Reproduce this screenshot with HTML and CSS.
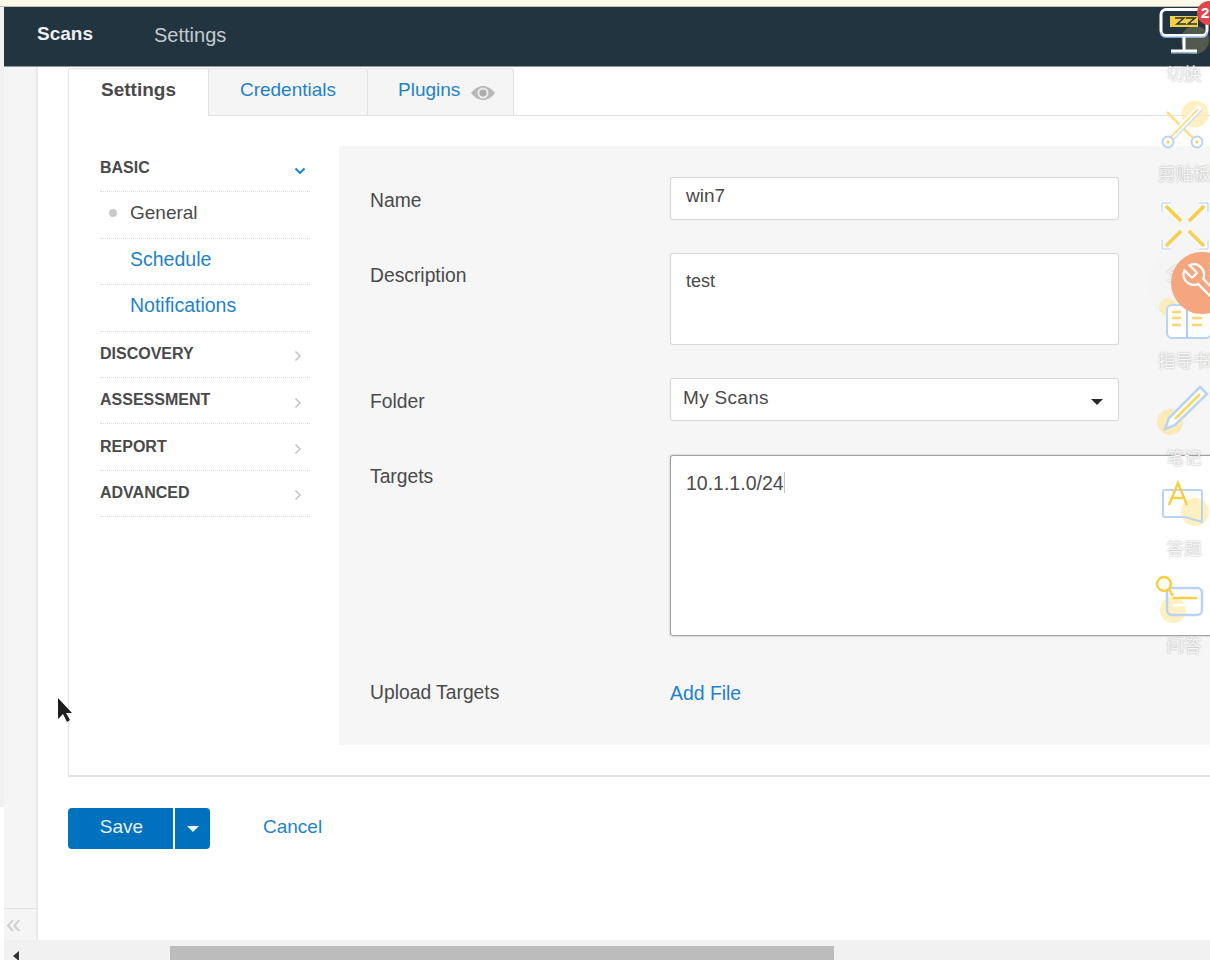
FILE: index.html
```html
<!DOCTYPE html>
<html>
<head>
  <link rel="stylesheet" href="styles.css">
</head>
<body>
  <div class="notice-strip"></div>
  <div class="window">
    <div class="edge"><div class="edge-fill"></div></div>
    <div class="app">
      <div class="navbar">
        <a class="nav-link active">Scans</a>
        <a class="nav-link">Settings</a>
      </div>
      <div class="workspace">
        <div class="sidebar">
          <div class="sidebar-foot">&laquo;</div>
        </div>
        <div class="content">
          <div class="tabs">
            <div class="tab active">Settings</div>
            <div class="tab credentials">Credentials</div>
            <div class="tab plugins">
              Plugins
              <svg class="eye" viewBox="0 0 26 16" width="26" height="16">
                <path d="M1 8C5 3 9 1 13 1s8 2 12 7c-4 5-8 7-12 7S5 13 1 8z" fill="#b8b8b8"/>
                <circle cx="13" cy="8" r="5.500" fill="#ececec"/>
                <circle cx="13" cy="8" r="3.600" fill="#adadad"/>
              </svg>
            </div>
            <div class="tabs-rest"></div>
          </div>
          <div class="panel">
            <div class="menu">
              <div class="menu-row head">BASIC
                <svg class="chev chev-open" viewBox="0 0 12 8" width="12" height="8"><path d="M1.500 1.500 6 6l4.500-4.500" fill="none" stroke="#1c86d0" stroke-width="2"/></svg>
              </div>
              <div class="menu-row current"><span class="dot"></span>General</div>
              <div class="menu-row sub">Schedule</div>
              <div class="menu-row sub">Notifications</div>
              <div class="menu-row head">DISCOVERY
                <svg class="chev" viewBox="0 0 8 12" width="8" height="12"><path d="M1.500 1.500 6 6l-4.500 4.500" fill="none" stroke="#c4c4c4" stroke-width="1.500"/></svg>
              </div>
              <div class="menu-row head">ASSESSMENT
                <svg class="chev" viewBox="0 0 8 12" width="8" height="12"><path d="M1.500 1.500 6 6l-4.500 4.500" fill="none" stroke="#c4c4c4" stroke-width="1.500"/></svg>
              </div>
              <div class="menu-row head">REPORT
                <svg class="chev" viewBox="0 0 8 12" width="8" height="12"><path d="M1.500 1.500 6 6l-4.500 4.500" fill="none" stroke="#c4c4c4" stroke-width="1.500"/></svg>
              </div>
              <div class="menu-row head">ADVANCED
                <svg class="chev" viewBox="0 0 8 12" width="8" height="12"><path d="M1.500 1.500 6 6l-4.500 4.500" fill="none" stroke="#c4c4c4" stroke-width="1.500"/></svg>
              </div>
            </div>
            <div class="form">
              <div class="form-row row-name">
                <div class="form-label">Name</div>
                <div class="field field-input">win7</div>
              </div>
              <div class="form-row row-desc">
                <div class="form-label">Description</div>
                <div class="field field-area">test</div>
              </div>
              <div class="form-row row-folder">
                <div class="form-label">Folder</div>
                <div class="field field-select">My Scans<span class="select-caret"></span></div>
              </div>
              <div class="form-row row-targets">
                <div class="form-label">Targets</div>
                <div class="field field-targets">10.1.1.0/24<span class="text-caret"></span></div>
              </div>
              <div class="form-row row-upload">
                <div class="form-label">Upload Targets</div>
                <a class="add-file">Add File</a>
              </div>
            </div>
          </div>
          <div class="actions">
            <div class="btn-save">Save</div>
            <div class="btn-split"><span class="split-caret"></span></div>
            <a class="cancel">Cancel</a>
          </div>
        </div>
      </div>
    </div>
  </div>
  <div class="hscroll">
    <span class="hscroll-arrow"></span>
    <div class="hscroll-thumb"></div>
  </div>

  <!-- floating cursor -->
  <svg class="cursor" viewBox="0 0 20 28" width="20" height="28">
    <path d="M1 1v21l5-5 4 8 3-2-4-7h6z" fill="#1d1d1d"/>
  </svg>

  <!-- floating tool dock -->
  <div class="dock">
    <div class="dock-item h-switch">
      <span class="badge">2</span>
      <svg viewBox="0 0 52 50" width="52" height="50">
        <circle cx="36" cy="32" r="14" fill="#ffe08a" opacity=".22"/>
        <rect x="2" y="1.500" width="46" height="26" rx="5" fill="none" stroke="#fff" stroke-width="3"/>
        <path d="M2 24q0 5 5 5h36q5 0 5-5" fill="none" stroke="#a9c8ee" stroke-width="1.500"/>
        <path d="M11 8h28v11H11z" fill="#f6cf45"/>
        <path d="M16 10h9l-7 6h9M27 10h9l-7 6h9" fill="none" stroke="#22343f" stroke-width="1.500"/>
        <path d="M25 29v13M12 43h26" stroke="#fff" stroke-width="3"/>
        <path d="M12 45h26" stroke="#a9c8ee" stroke-width="1"/>
      </svg>
      <div class="dock-label">切换</div>
    </div>
    <div class="dock-item h-clip">
      <svg viewBox="0 0 52 54" width="52" height="54">
        <circle cx="36" cy="14" r="13.500" fill="#ffe9a8" opacity=".7"/>
        <path d="M8 12l28 28" stroke="#ffe08a" stroke-width="2.500"/>
        <path d="M11 39 41 8" stroke="#c6dbf4" stroke-width="7"/>
        <path d="M11 38 41 7" stroke="#fff" stroke-width="6"/>
        <path d="M39 9 12 37" stroke="#ffe08a" stroke-width="2"/>
        <circle cx="9" cy="42" r="5.500" fill="#fff" stroke="#b9d3f2" stroke-width="2"/>
        <circle cx="38" cy="42" r="5.500" fill="#fff" stroke="#b9d3f2" stroke-width="2"/>
        <circle cx="9" cy="42" r="1.500" fill="#f6cf45"/>
        <circle cx="38" cy="42" r="1.500" fill="#f6cf45"/>
      </svg>
      <div class="dock-label">剪贴板</div>
    </div>
    <div class="dock-item h-full">
      <svg viewBox="0 0 52 52" width="52" height="52">
        <path d="M3 12V3h9M40 3h9v9M3 40v9h9M49 40v9h-9" fill="none" stroke="#fff" stroke-width="4"/>
        <path d="M3 12V3h9M40 3h9v9M3 40v9h9M49 40v9h-9" fill="none" stroke="#a9c8ee" stroke-width="1"/>
        <path d="M7 6l15 15M45 6 30 21M7 46l15-15M45 46 30 31" stroke="#f6cf45" stroke-width="3.500"/>
      </svg>
      <div class="dock-label">全屏</div>
    </div>
    <div class="dock-item h-guide">
      <svg viewBox="0 0 52 46" width="52" height="46">
        <circle cx="9" cy="7" r="9" fill="#ffe9a8" opacity=".8"/>
        <rect x="8" y="5" width="44" height="33" rx="5" fill="#fff" stroke="#b9d3f2" stroke-width="2"/>
        <path d="M28 5v33" stroke="#a9c8ee" stroke-width="2"/>
        <path d="M13 12h9M13 18h9M13 25h9M33 12h10M33 18h10M33 25h10" stroke="#f9d65c" stroke-width="2.500"/>
      </svg>
      <div class="dock-label">指导书</div>
    </div>
    <div class="dock-item h-note">
      <svg viewBox="0 0 52 52" width="52" height="52">
        <circle cx="11" cy="37" r="13" fill="#ffe9a8" opacity=".8"/>
        <path d="M41 2 48 9 16 40 6 44l4-11z" fill="#fff" stroke="#b9d3f2" stroke-width="2.500"/>
        <path d="M41 9 16 34" stroke="#f9d65c" stroke-width="2.500"/>
      </svg>
      <div class="dock-label">笔记</div>
    </div>
    <div class="dock-item h-quiz">
      <svg viewBox="0 0 52 48" width="52" height="48">
        <circle cx="36" cy="32" r="14" fill="#ffe9a8" opacity=".7"/>
        <path d="M6 10h35q2 0 2 2v30L26 37H6q-2 0-2-2V12q0-2 2-2z" fill="none" stroke="#b9d3f2" stroke-width="2"/>
        <path d="M10 25 19 3l9 22M13 18h12" fill="none" stroke="#f6cf45" stroke-width="2.500"/>
      </svg>
      <div class="dock-label">答题</div>
    </div>
    <div class="dock-item h-ask">
      <svg viewBox="0 0 52 54" width="52" height="54">
        <circle cx="14" cy="36" r="13" fill="#ffe9a8" opacity=".7"/>
        <rect x="8" y="14" width="35" height="27" rx="5" fill="none" stroke="#b9d3f2" stroke-width="2.500"/>
        <circle cx="5" cy="10" r="7" fill="none" stroke="#f6cf45" stroke-width="2.500"/>
        <path d="M10 15l4 7M14 24h24" stroke="#f6cf45" stroke-width="2.500"/>
        <path d="M14 31h14" stroke="#fff" stroke-width="2.500"/>
      </svg>
      <div class="dock-label">问答</div>
    </div>
  </div>

  <div class="tool-fab">
    <svg viewBox="0 0 44 44" width="44" height="44">
      <path d="M32 2h8M32 9h8M32 15h8" stroke="#f9d65c" stroke-width="2" opacity=".8"/>
      <g transform="translate(44 0) scale(-1.700 1.700)">
        <path d="M14.700 6.300a1 1 0 0 0 0 1.400l1.600 1.600a1 1 0 0 0 1.400 0l3.770-3.770a6 6 0 0 1-7.940 7.940l-6.910 6.910a2.120 2.120 0 0 1-3-3l6.910-6.910a6 6 0 0 1 7.940-7.940l-3.760 3.760z" fill="none" stroke="#fff" stroke-width="1.300"/>
      </g>
    </svg>
  </div>
</body>
</html>
```

FILE: styles.css
```css
* {
  box-sizing: border-box;
}
html, body {
  margin: 0;
  height: 960px;
  overflow: hidden;
  background: #fff;
}
body {
  font-family: "Liberation Sans", Arial, sans-serif;
  font-size: 18px;
  color: #4a4a4a;
  position: relative;
  width: 1210px;
}
a {
  color: #1f82c8;
}
.notice-strip {
  height: 7px;
  background: #fdf9e8;
  border-bottom: 1px solid #b9bcb8;
}
.window {
  display: flex;
  height: 933px;
}
.edge {
  width: 4px;
  flex: none;
}
.edge-fill {
  height: 800px;
  background: #f1f1f1;
}
.app {
  flex: 1;
  min-width: 0;
  display: flex;
  flex-direction: column;
}
.navbar {
  height: 60px;
  background: #22343f;
  border-bottom: 1px solid #8d979d;
  display: flex;
  align-items: center;
  padding-left: 33px;
  gap: 61px;
  flex: none;
}
.nav-link {
  color: #c4cbcf;
  font-size: 20px;
  margin-top: -3px;
}
.nav-link.active {
  color: #eef0f1;
  font-size: 19px;
  font-weight: bold;
  margin-top: -6px;
}
.workspace {
  flex: 1;
  display: flex;
  min-height: 0;
}
.sidebar {
  width: 34px;
  flex: none;
  background: #f5f5f5;
  border-right: 2px solid #e9e9e9;
  display: flex;
  flex-direction: column;
  justify-content: flex-end;
}
.sidebar-foot {
  height: 32px;
  border-top: 1px solid #e2e2e2;
  color: #cfcfcf;
  font-size: 27px;
  line-height: 30px;
  padding-left: 2px;
}
.content {
  flex: 1;
  min-width: 0;
  padding: 1px 0 0 30px;
}
.tabs {
  display: flex;
  height: 48px;
}
.tab {
  font-size: 19px;
  color: #1f82c8;
  background: #f5f5f5;
  border: 1px solid #e2e2e2;
  border-left: none;
  border-radius: 0 3px 0 0;
  display: flex;
  align-items: center;
  justify-content: center;
  gap: 10px;
  padding-bottom: 5px;
}
.tab.active {
  width: 141px;
  color: #4a4a4a;
  font-weight: bold;
  background: #fff;
  border-left: 1px solid #e2e2e2;
  border-bottom: none;
  border-radius: 3px 0 0 0;
}
.tab.credentials {
  width: 159px;
}
.tab.plugins {
  width: 146px;
  justify-content: flex-start;
  padding-left: 30px;
}
.tabs-rest {
  flex: 1;
  border-bottom: 1px solid #e2e2e2;
}
.eye {
  margin-top: 6px;
}
.panel {
  height: 661px;
  width: 1200px;
  border-left: 1px solid #e2e2e2;
  border-bottom: 2px solid #e4e4e4;
  padding: 30px 0 30px 31px;
  display: flex;
}
.menu {
  width: 210px;
  flex: none;
  margin-right: 29px;
}
.menu-row {
  height: 46.400px;
  border-bottom: 1px dotted #dcdcdc;
  display: flex;
  align-items: center;
  padding-bottom: 4px;
}
.menu-row.head {
  font-size: 16px;
  font-weight: bold;
  padding-bottom: 1px;
  justify-content: space-between;
  padding-right: 8px;
}
.menu-row.sub {
  color: #1f82c8;
  padding-left: 30px;
  font-size: 19.500px;
}
.menu-row.current {
  font-size: 19px;
  padding-left: 9px;
}
.dot {
  width: 8px;
  height: 8px;
  border-radius: 50%;
  background: #c9c9c9;
  margin-right: 13px;
}
.chev {
  margin-top: 5px;
}
.chev-open {
  margin-right: -4px;
}
.form {
  flex: 1;
  background: #f6f6f6;
  padding: 31px 0 0 31px;
  height: 599px;
}
.form-row {
  display: flex;
}
.form-label {
  width: 300px;
  flex: none;
  font-size: 19.300px;
  line-height: 22px;
}
.field {
  background: #fff;
  border: 1px solid #d9d9d9;
  border-radius: 3px;
  width: 449px;
  font-size: 18px;
  line-height: 22px;
  box-shadow: 0 0 1px rgba(0, 0, 0, .12);
}
.row-name {
  margin-bottom: 33px;
}
.row-name .form-label {
  margin-top: 13px;
}
.field-input {
  height: 43px;
  padding: 7px 15px;
  font-size: 19px;
}
.row-desc {
  margin-bottom: 33px;
}
.row-desc .form-label {
  margin-top: 12px;
}
.field-area {
  height: 92px;
  padding: 16px 15px;
}
.row-folder {
  margin-bottom: 34px;
}
.row-folder .form-label {
  margin-top: 13px;
}
.field-select {
  height: 43px;
  padding: 8px 12px;
  font-size: 19px;
  display: flex;
  align-items: flex-start;
  justify-content: space-between;
  letter-spacing: .3px;
}
.select-caret {
  width: 0;
  height: 0;
  margin: 12px 3px 0 0;
  border-left: 6px solid transparent;
  border-right: 6px solid transparent;
  border-top: 6px solid #2a2a2a;
}
.row-targets {
  margin-bottom: 45px;
}
.row-targets .form-label {
  margin-top: 11px;
}
.field-targets {
  width: 560px;
  flex: none;
  height: 181px;
  padding: 16px 15px;
  border-color: #a0a0a0;
  font-size: 19.500px;
  box-shadow: 0 0 2px rgba(0, 0, 0, .3);
}
.row-upload {
  padding-top: 1px;
}
.text-caret {
  display: inline-block;
  width: 1px;
  height: 21px;
  background: #c4c4c4;
  vertical-align: top;
}
.add-file {
  font-size: 19.400px;
  line-height: 22px;
}
.actions {
  display: flex;
  align-items: center;
  margin-top: 31px;
}
.btn-save {
  width: 105px;
  height: 41px;
  background: #0071bd;
  color: #e4eff7;
  font-size: 19px;
  border-radius: 4px 0 0 4px;
  display: flex;
  align-items: center;
  justify-content: center;
  padding: 0 0 4px 2px;
}
.btn-split {
  width: 35px;
  height: 41px;
  margin-left: 2px;
  background: #0071bd;
  border-radius: 0 4px 4px 0;
  display: flex;
  align-items: center;
  justify-content: center;
}
.split-caret {
  width: 0;
  height: 0;
  border-left: 6px solid transparent;
  border-right: 6px solid transparent;
  border-top: 6px solid #eef5fa;
}
.cancel {
  margin-left: 53px;
  font-size: 19px;
  padding-bottom: 4px;
}
.hscroll {
  height: 20px;
  background: #f1f1f1;
  margin-left: 4px;
  padding: 6px 0 0 166px;
  position: relative;
}
.hscroll-thumb {
  width: 664px;
  height: 14px;
  background: #bcbcbc;
}
.hscroll-arrow {
  position: absolute;
  left: 9px;
  top: 11px;
  width: 0;
  height: 0;
  border-top: 5px solid transparent;
  border-bottom: 5px solid transparent;
  border-right: 6px solid #333;
}
.cursor {
  position: absolute;
  left: 57px;
  top: 697px;
}
.dock {
  position: absolute;
  left: 1158px;
  top: 8px;
  width: 52px;
  display: flex;
  flex-direction: column;
}
.dock-item {
  position: relative;
  width: 52px;
  text-align: center;
}
.dock-item svg {
  display: block;
  overflow: visible;
  margin-left: 1px;
}
.dock-label {
  font-family: "Noto Sans CJK SC", sans-serif;
  font-size: 17.500px;
  line-height: 22px;
  color: #f6f6f6;
  text-shadow: 0 0 2px rgba(110, 110, 110, .6);
  white-space: nowrap;
}
.h-switch {
  height: 92px;
}
.h-switch .dock-label {
  margin-top: 4px;
}
.h-clip {
  height: 100px;
}
.h-clip .dock-label {
  margin-top: 8px;
}
.h-full {
  height: 100px;
}
.h-full .dock-label {
  margin-top: 10px;
}
.h-guide {
  height: 85px;
}
.h-guide .dock-label {
  margin-top: 3px;
}
.h-note {
  height: 95px;
}
.h-note .dock-label {
  margin-top: 9px;
}
.h-quiz {
  height: 94px;
}
.h-quiz .dock-label {
  margin-top: 9px;
}
.h-ask .dock-label {
  margin-top: 6px;
}
.badge {
  position: absolute;
  left: 39px;
  top: -7px;
  width: 24px;
  height: 24px;
  border-radius: 50%;
  background: #e0474c;
  color: #fff;
  font-weight: bold;
  font-size: 15px;
  line-height: 24px;
  text-align: left;
  padding-left: 4px;
}
.tool-fab {
  position: absolute;
  left: 1171px;
  top: 252px;
  width: 62px;
  height: 62px;
  border-radius: 50%;
  background: #f4a67e;
  box-shadow: 0 0 0 22px rgba(240, 240, 240, .12);
  display: flex;
  align-items: center;
  padding-left: 6px;
}
```
